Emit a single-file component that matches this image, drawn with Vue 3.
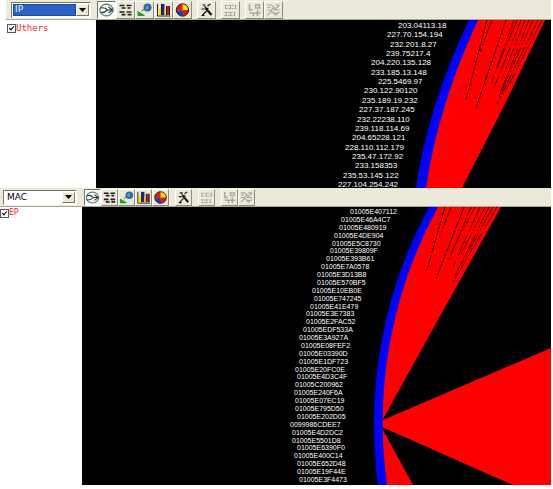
<script setup>
import { ref } from 'vue'

const tools = [
  { id: 'globe', label: 'Ring view' },
  { id: 'list', label: 'Node list' },
  { id: 'net', label: 'Traffic view' },
  { id: 'bars', label: 'Bar chart' },
  { id: 'pie', label: 'Pie chart' },
  { id: 'wand', label: 'Options', gap: true },
  { id: 'table', label: 'Details', gap: true, off: true },
  { id: 'tree', label: 'Expand', gap: true, off: true },
  { id: 'mesh', label: 'Collapse', off: true },
]

// Each node: label, left edge; rows are evenly spaced along the ring.
const ipNodes = [
  ['203.04113.18', 398], ['227.70.154.194', 387], ['232.201.8.27', 390], ['239.75217.4', 386],
  ['204.220.135.128', 371], ['233.185.13.148', 371], ['225.5469.97', 378], ['230.122.90120', 364],
  ['235.189.19.232', 362], ['227.37.187.245', 359], ['232.22238.110', 357], ['239.118.114.69', 355],
  ['204.65228.121', 352], ['228.110.112.179', 345], ['235.47.172.92', 352], ['233.158353', 355],
  ['235.53.145.122', 343], ['227.104.254.242', 338],
]
const macNodes = [
  ['01005E407112', 350], ['01005E46A4C7', 341], ['01005E480919', 339], ['01005E4DE904', 334],
  ['01005E5C8730', 332], ['01005E39809F', 330], ['01005E393B61', 326], ['01005E7A0578', 321],
  ['01005E3D13B8', 317], ['01005E570BF5', 317], ['01005E10EB0E', 312], ['01005E747245', 314],
  ['01005E41E479', 310], ['01005E3E7383', 306], ['01005E2FAC52', 306], ['01005EDF533A', 303],
  ['01005E3A927A', 299], ['01005E08FEF2', 301], ['01005E03390D', 299], ['01005E1DF723', 299],
  ['01005E20FC0E', 295], ['01005E4D3C4F', 297], ['01005C200962', 295], ['01005E240F6A', 294],
  ['01005E07EC19', 295], ['01005E795D50', 295], ['01005E202D05', 297], ['0099986CDEE7', 290],
  ['01005E4D2DC2', 292], ['01005E5501D8', 292], ['01005E6390F0', 297], ['01005E400C14', 294],
  ['01005E652D48', 297], ['01005E19F44E', 297], ['01005E3F4473', 299],
]

// Gaps between the link lines, thinning out towards the hub.
const ipGaps = [
  'M487 20L466 100', 'M492 20L480 52', 'M506 20L476 108', 'M514 20L491 84', 'M517 20L497 68',
  'M521 20L494 88', 'M525 20L503 76', 'M529 20L499 96', 'M533 20L502 90', 'M538 20L497 104', 'M542 20L505 92',
]
const macGaps = [
  'M445 207L427 270', 'M451 207L440 236', 'M464 207L436 279', 'M471 207L448 262', 'M475 207L452 250',
  'M480 207L453 267', 'M485 207L460 256', 'M489 207L455 276', 'M493 207L462 263', 'M497 207L452 284',
]

const panels = ref([
  {
    id: 'ip', kind: 'IP', item: 'Uthers', on: true, view: '96 20 455 168',
    nodes: ipNodes, y0: 28, step: 9.35, gaps: ipGaps,
    red: ['M474 20H545L505 104L462 188H421Q434 106 474 20Z'],
    ring: 'M469 20Q428 106 416 188H426Q438 106 478 20Z',
  },
  {
    id: 'mac', kind: 'MAC', item: 'EP', on: true, view: '82 207 469 278',
    nodes: macNodes, y0: 214, step: 7.88, gaps: macGaps,
    red: [
      'M433 207H501L444 309L383 419L379 425Q378 309 433 207Z',
      'M381 421L383 420L551 348V485H513L382 427Z',
      'M380 430H383L413 485H381Z',
    ],
    ring: 'M429 207A457 457 0 0 0 378 485H387A449 449 0 0 1 438 207Z',
  },
])
</script>

<template>
  <main class="app">
    <section v-for="p in panels" :key="p.id" class="panel" :class="p.id">
      <div class="toolbar">
        <div class="combo">
          <select v-model="p.kind" aria-label="Address type">
            <option>IP</option>
            <option>MAC</option>
          </select>
          <span class="arrow"><svg viewBox="0 0 7 4"><path d="M0 0H7L3.500 4Z" /></svg></span>
        </div>
        <div class="tools">
          <button
            v-for="t in tools"
            :key="t.id"
            type="button"
            :aria-label="t.label"
            :disabled="t.off"
            :class="{ gap: t.gap, pressed: t.id === 'globe' }"
          >
            <svg viewBox="0 0 16 16">
              <g v-if="t.id === 'globe'" fill="none">
                <ellipse cx="8" cy="8" rx="6.500" ry="5.800" stroke="#46817c" stroke-width="1.200" />
                <path d="M2 6Q6 5 9 8H14M2 10.500Q6 11 9 8M10 5L14 8L10 11" stroke="#263b40" stroke-width="1.100" />
              </g>
              <g v-else-if="t.id === 'list'" stroke="#222" stroke-width="1.700" fill="none">
                <path d="M2 3.500H7M9 3.500H14M4 6H8M10 6H13M2 10H7M9 10H14M4 12.700H8M10 12.700H14" />
              </g>
              <g v-else-if="t.id === 'net'">
                <circle cx="11" cy="5.500" r="4" fill="#2865b0" />
                <path d="M9 4L12 3L12 7L9 8Z" fill="#48a7a4" />
                <path d="M1 9L8 13V14H1Z" fill="#10a51e" />
                <path d="M5 9L8 7" stroke="#555" />
              </g>
              <g v-else-if="t.id === 'bars'">
                <path d="M2 2V14H15" stroke="#222" fill="none" />
                <path d="M3 6H6V13H3Z" fill="#ffe100" />
                <path d="M6 2H9V13H6Z" fill="#1724a0" />
                <path d="M9 7H11V13H9Z" fill="#ffe100" />
                <path d="M11 4H14V13H11Z" fill="#d91616" />
                <path d="M6 2V13M11 4V13M14 4V13" stroke="#151515" />
              </g>
              <g v-else-if="t.id === 'pie'">
                <circle cx="8" cy="8" r="6.200" fill="#ffdb00" />
                <path d="M8 8V2A6 6 0 0 0 2 9Z" fill="#e31515" />
                <path d="M8 8L2 9A6 6 0 0 0 9 14Z" fill="#1e3cb4" />
                <path d="M8 8H14A6 6 0 0 1 9 14Z" fill="#e31515" />
                <circle cx="8" cy="8" r="6.200" fill="none" stroke="#222" />
              </g>
              <g v-else-if="t.id === 'wand'" stroke="#111" fill="none">
                <path d="M7 6L13 13" stroke-width="2.200" />
                <path d="M4 3H7M9 4L12 2M3 7H6M8 9L4 13M6 4L8 7L10 6M3 13.500H6" stroke-width="1.200" />
              </g>
              <g v-else-if="t.id === 'table'" stroke="#aaa697" fill="none">
                <path d="M3 3.500H14M3 6.500H14M2 10.500H13M2 13.500H13" stroke-dasharray="2 1" />
                <path d="M3 3V7M8 3V7M13 3V7M4 10V14M8 10V14M12 10V14" />
              </g>
              <g v-else-if="t.id === 'tree'" stroke="#aaa697" fill="none">
                <path d="M3 2V8H6M3 11H7V14M8 11H14M11 8V14" stroke-width="1.600" />
                <path d="M9 3H13V6H9Z" stroke-width="1.400" />
              </g>
              <g v-else stroke="#aaa697" fill="none">
                <path d="M2 3H6L10 7L14 3M2 8H6L9 5M8 8H14M2 13L6 9L10 13L14 10M10 3H14M2 5.500H5M8 11H13" stroke-width="1.200" />
              </g>
            </svg>
          </button>
        </div>
      </div>
      <div class="body">
        <aside>
          <label>
            <input v-model="p.on" type="checkbox" />
            <span>{{ p.item }}</span>
          </label>
        </aside>
        <svg class="graph" :viewBox="p.view" role="img" :aria-label="p.kind + ' node ring'">
          <path v-for="d in p.red" :key="d" :d="d" fill="#f00" />
          <path v-for="(d, i) in p.gaps" :key="d" :d="d" class="streak" :class="{ strong: i === 2 || i === 0 }" />
          <path :d="p.ring" fill="#00f" />
          <text v-for="(n, i) in p.nodes" :key="i" :x="n[1]" :y="Math.round(p.y0 + i * p.step)">{{ n[0] }}</text>
        </svg>
      </div>
    </section>
  </main>
</template>

<style>
body {
  margin: 0;
  background: #fff;
}
</style>

<style scoped>
.app {
  padding-right: 2px;
  font-family: "Liberation Sans", Arial, sans-serif;
}
.toolbar {
  display: flex;
  align-items: center;
  box-sizing: border-box;
  background: #ece9d8;
  border-bottom: 1px solid #aca899;
}
.ip .toolbar {
  height: 20px;
  margin-left: 6px;
  padding-left: 5px;
}
.mac .toolbar {
  height: 19px;
  padding-left: 3px;
}
.combo {
  display: flex;
  box-sizing: border-box;
  width: 80px;
  height: 16px;
  padding: 1px;
  border: 1px solid;
  border-color: #77756b #fff #fff #77756b;
  background: #fff;
}
.mac .combo {
  width: 74px;
  height: 15px;
}
select {
  appearance: none;
  flex: 1;
  min-width: 0;
  margin: 0;
  padding: 0 2px;
  border: 0;
  border-radius: 0;
  background: #fff;
  color: #000;
  font: 9px/11px "DejaVu Sans", sans-serif;
}
.ip select {
  background: #2862c4;
  color: #e9f2ff;
  outline: 1px dotted #173469;
  outline-offset: -1px;
}
.arrow {
  display: flex;
  align-items: center;
  justify-content: center;
  box-sizing: border-box;
  width: 13px;
  border: 1px solid;
  border-color: #fff #77756b #77756b #fff;
  background: #ece9d8;
}
.arrow svg {
  width: 7px;
  height: 4px;
}
.tools {
  display: flex;
  padding-left: 6px;
}
.mac .tools {
  padding-left: 7px;
}
button {
  box-sizing: border-box;
  width: 19px;
  height: 18px;
  margin: 0;
  padding: 0;
  border: 1px solid;
  border-color: #fff #8d8a7c #8d8a7c #fff;
  background: #ece9d8;
}
.mac button {
  width: 17px;
  height: 17px;
}
button.gap {
  margin-left: 5px;
}
.mac button.gap {
  margin-left: 6px;
}
button.pressed {
  border-color: #77756b #fff #fff #77756b;
  background: #faf9f3;
}
button svg {
  display: block;
  width: 100%;
  height: 100%;
}
.body {
  display: flex;
  align-items: flex-start;
}
aside {
  box-sizing: border-box;
  flex: none;
  padding-top: 3px;
}
.ip aside {
  width: 96px;
  padding-left: 7px;
}
.mac aside {
  width: 82px;
  padding-top: 1px;
}
label {
  display: flex;
  align-items: center;
  color: #f22;
  font: 9px/10px "DejaVu Sans Mono", monospace;
}
.mac label {
  font-size: 8px;
}
input {
  appearance: none;
  position: relative;
  box-sizing: border-box;
  width: 9px;
  height: 9px;
  margin: 0;
  border: 1px solid #555;
  background: #fff;
}
input:checked::after {
  content: "";
  position: absolute;
  left: 2px;
  top: 0;
  width: 2px;
  height: 4px;
  border: solid #000;
  border-width: 0 1px 1px 0;
  transform: rotate(40deg);
}
.graph {
  display: block;
  flex: 1;
  min-width: 0;
  background: #000;
}
.graph text {
  fill: #fff;
  font: 7px "Liberation Sans", Arial, sans-serif;
}
.ip .graph text {
  font-size: 8px;
}
.streak {
  fill: none;
  stroke: #500;
  stroke-width: 1;
  stroke-dasharray: 11 1 7 1 3 2 2 3;
}
.streak.strong {
  stroke: #200;
  stroke-dasharray: 14 1 8 2;
}
</style>
